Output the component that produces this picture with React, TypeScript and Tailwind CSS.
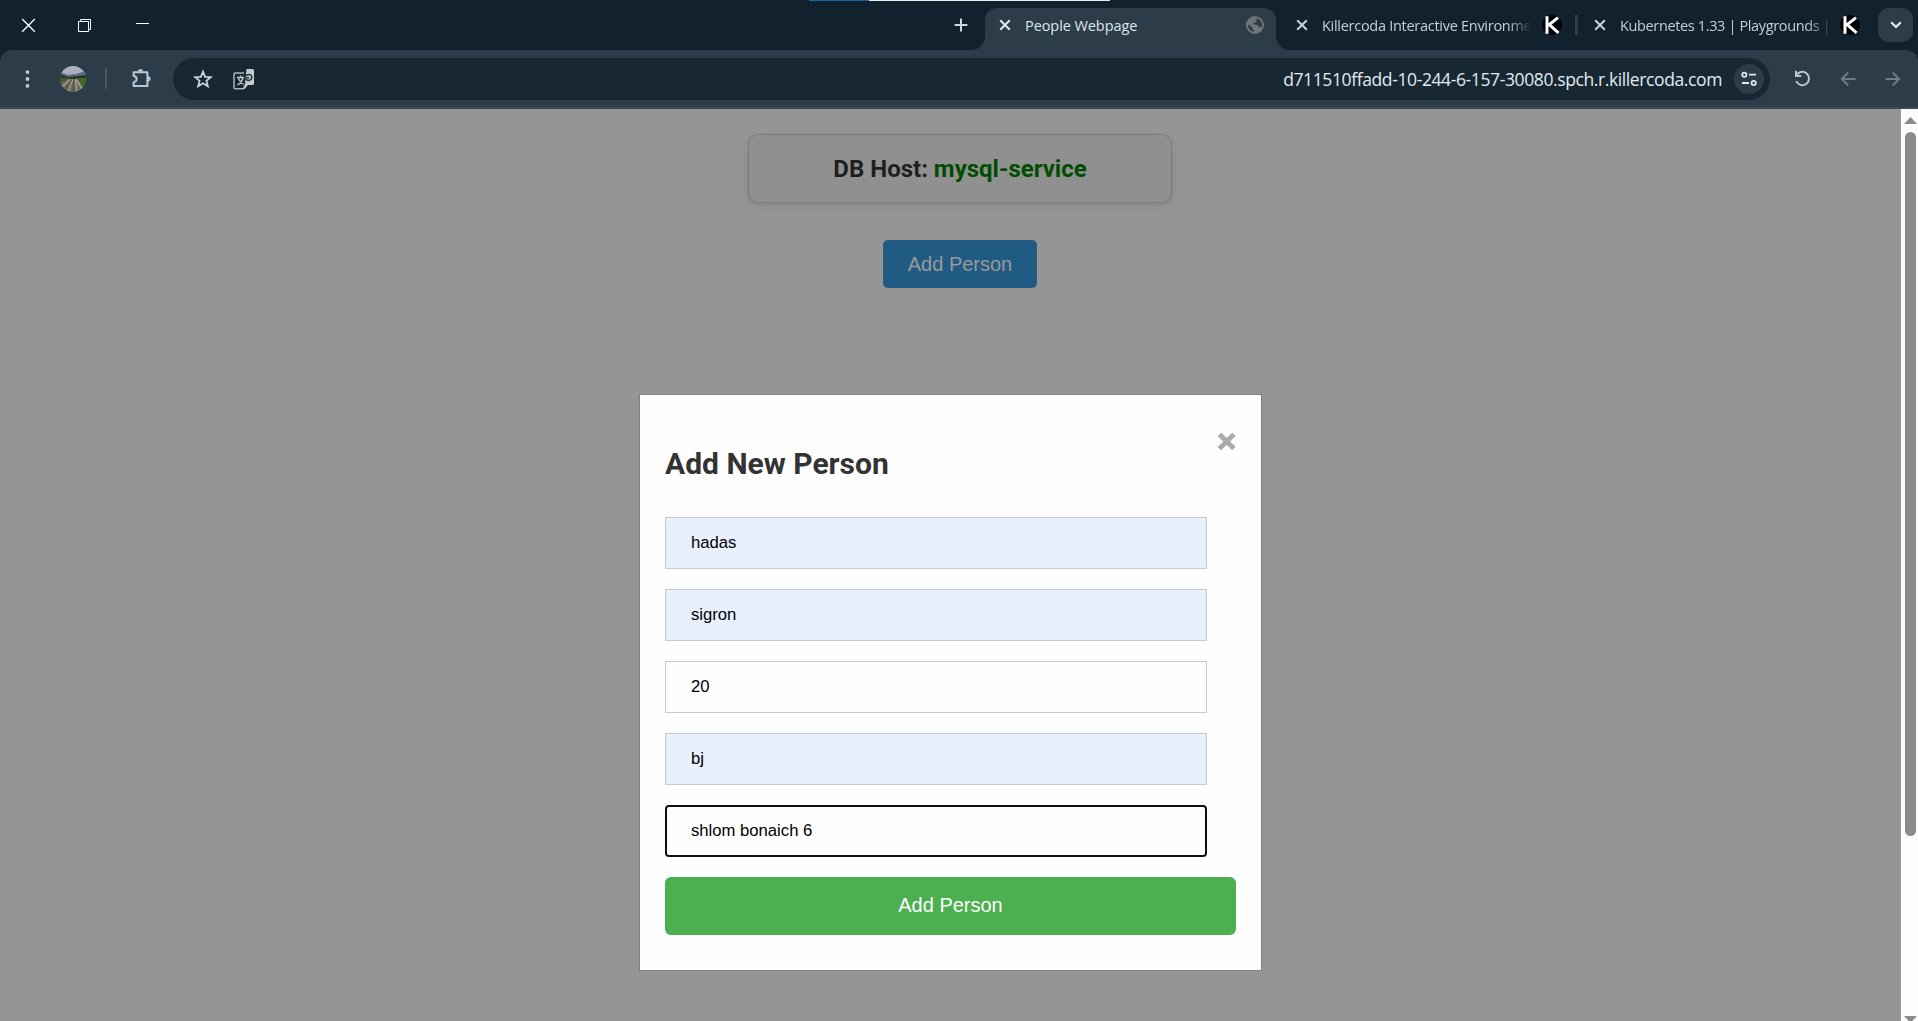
import React from "react";

const ui = "font-['Open_Sans','Noto_Sans',sans-serif]";

function CloseGlyph({ color }: { color: string }) {
  return (
    <svg className="h-3 w-3 shrink-0" viewBox="0 0 12 12" fill="none" stroke={color} strokeWidth="2">
      <path d="M1.2 1.2 10.8 10.8M10.8 1.2 1.2 10.8" />
    </svg>
  );
}

function KillercodaIcon() {
  return (
    <svg className="h-5 w-5 shrink-0" viewBox="0 0 20 20">
      <circle cx="10" cy="10" r="10" fill="#000" />
      <path d="M5 1.200V18.800M16 2.600 7.200 9.600 16.500 17.800" fill="none" stroke="#fff" strokeWidth="3" />
    </svg>
  );
}

function TabStrip() {
  return (
    <div className="relative flex h-[50px] items-center bg-[#11212d]">
      <div className="absolute left-[809px] top-0 flex h-px w-[301px]">
        <div className="w-[60px] bg-[#1c64a0]" />
        <div className="flex-1 bg-[#e3f1f3]" />
      </div>
      <svg className="ml-[21px] h-[15px] w-[15px]" viewBox="0 0 15 15" stroke="#fff" strokeWidth="1.3" fill="none">
        <path d="M1.2 1 13.8 13.8M13.8 1 1.2 13.8" />
      </svg>
      <svg className="ml-[41px] h-[15px] w-[15px]" viewBox="0 0 15 15" stroke="#fff" fill="none">
        <path d="M1.5 3.5h10v10h-10zM3.5 3.5v-2h10v10h-2" />
      </svg>
      <div className="ml-[44px] mb-[3px] h-px w-[13px] bg-white" />
      <svg className="ml-[805px] h-[14px] w-[14px]" viewBox="0 0 14 14" stroke="#c9d9e6" strokeWidth="2">
        <path d="M7 .6V13.4M.6 7H13.4" />
      </svg>

      <div className="relative ml-[17px] mt-2 flex h-[42px] w-[291px] items-center rounded-t-[12px] bg-[#2c3c48] pb-2 pl-[14px] pr-3">
        <svg className="absolute -left-[14px] bottom-0 h-[14px] w-[14px]" viewBox="0 0 14 14">
          <path d="M14 0V14H0A14 14 0 0 0 14 0Z" fill="#2c3c48" />
        </svg>
        <svg className="absolute -right-[14px] bottom-0 h-[14px] w-[14px]" viewBox="0 0 14 14">
          <path d="M0 0V14H14A14 14 0 0 1 0 0Z" fill="#2c3c48" />
        </svg>
        <CloseGlyph color="#dfeaf2" />
        <span className={`ml-[14px] mt-[2px] flex-1 whitespace-nowrap text-[14.500px] tracking-[-0.080px] leading-5 text-[#dbe6ee] ${ui}`}>People Webpage</span>
        <svg className="h-[18px] w-[18px]" viewBox="0 0 18 18">
          <circle cx="9" cy="9" r="9" fill="#6d747b" />
          <path
            d="M10.500 2.200C13.800 2.900 16 5.600 16 9c0 1-.2 1.800-.5 2.500-.6-.7-1.300-1-2.200-1h-1.300c0-1.300-.7-2.100-2-2.100H7.500V6.500H9c.9 0 1.500-.6 1.500-1.500ZM2.100 8.600 6.300 11.300v1.200c0 .8.700 1.400 1.600 1.400v1.900C4.400 15.300 2 12.500 2 9Z"
            fill="#2c3c48"
          />
        </svg>
      </div>

      <div className="ml-[20px] flex w-[266px] items-center">
        <CloseGlyph color="#c3d2dd" />
        <span className={`ml-[14px] mt-[2px] w-[210px] whitespace-nowrap text-[14.500px] tracking-[-0.280px] leading-5 text-[#c0d0dc] [mask-image:linear-gradient(to_right,#000_186px,transparent_210px)] ${ui}`}>
          Killercoda Interactive Environme
        </span>
        <span className="ml-[10px] flex"><KillercodaIcon /></span>
      </div>
      <div className="ml-[13px] h-5 w-[3px] bg-[#2c3c48]" />
      <div className="ml-[16px] flex items-center">
        <CloseGlyph color="#c3d2dd" />
        <span className={`ml-[14px] mt-[2px] w-[210px] whitespace-nowrap text-[14.500px] tracking-[-0.360px] leading-5 text-[#c0d0dc] [mask-image:linear-gradient(to_right,#000_186px,transparent_214px)] ${ui}`}>
          Kubernetes 1.33 | Playgrounds |
        </span>
        <span className="ml-[10px] flex"><KillercodaIcon /></span>
      </div>
      <div className="ml-[18px] flex h-[34px] w-[35px] items-center justify-center rounded-[11px] bg-[#2c3c48]">
        <svg className="h-2 w-3" viewBox="0 0 12 8" fill="none" stroke="#e4eef5" strokeWidth="2.200">
          <path d="M1.200 1.200 6 6 10.800 1.200" />
        </svg>
      </div>
    </div>
  );
}

function Toolbar() {
  return (
    <div className="bg-[#11212d]">
      <div className="flex h-[59px] items-center rounded-t-[12px] border-b-2 border-[#3f4954] bg-[#2c3c48]">
        <svg className="ml-[25px] h-[18px] w-[5px]" viewBox="0 0 5 18" fill="#b9cddc">
          <circle cx="2.500" cy="2.100" r="1.900" />
          <circle cx="2.500" cy="9" r="1.900" />
          <circle cx="2.500" cy="15.900" r="1.900" />
        </svg>
        <svg className="ml-[30px] h-[26px] w-[26px] overflow-hidden rounded-full" viewBox="0 0 26 26">
          <rect width="26" height="26" fill="#6f6a60" />
          <rect width="26" height="9" fill="#a9b0bd" />
          <path d="M0 6 8 9 16 8 26 5V12H0Z" fill="#5b6b7c" />
          <path d="M0 8 8 11 18 10 26 9V13H0Z" fill="#25362f" />
          <path d="M0 12H9L2 17 0 18Z" fill="#425a35" />
          <path d="M17 12H26V24L22 20Z" fill="#3f6a26" />
          <path d="M11 13 2 21M13 13 8 26M15 13 17 26M16 13 23 24" stroke="#a89c8c" strokeWidth="1.400" />
          <path d="M12 13 5 24M14 13 13 26" stroke="#4b463f" strokeWidth="1" />
        </svg>
        <div className="ml-[19px] h-5 w-[2px] bg-[#475966]" />
        <svg className="ml-[24px] mb-[1px] h-[22px] w-[22px]" viewBox="0 0 22 22">
          <path
            d="M3.200 4.200H17V17.900H3.200V14.200C7.300 13.600 7.300 8.600 3.200 8Z"
            transform="translate(-.6 1)"
            fill="none"
            stroke="#b4cadb"
            strokeWidth="2"
            strokeLinejoin="round"
          />
          <path d="M6.900 4.500a2.600 2.600 0 0 1 5.200 0ZM17 9.200a2.600 2.600 0 0 1 0 5.200Z" fill="#b4cadb" />
        </svg>

        <div className="ml-[20px] flex h-[42px] w-[1597px] items-center rounded-full bg-[#182833]">
          <svg className="ml-[20px] h-5 w-5" viewBox="0 0 20 20" fill="none" stroke="#c6d5e0" strokeWidth="1.800">
            <path d="m10 2.600 2.100 5.200 5.600.4-4.300 3.600 1.400 5.500L10 14.300l-4.800 3 1.400-5.500L2.300 8.200l5.600-.4Z" />
          </svg>
          <svg className="ml-[20px] h-[22px] w-[22px]" viewBox="0 0 22 22">
            <path d="M11 5H2.200Q1 5 1 6.200V19.500Q1 20.700 2.200 20.700H10.500" fill="none" stroke="#a6b1b9" strokeWidth="1.500" />
            <path d="M13.500 1H19.500Q21 1 21 2.500V15.500Q21 17 19.500 17H15L11.500 21H9.500L12 16Z" fill="#c3cbd1" />
            <path d="M4 9.500H11M7.500 7.500V9.500M10 9.500Q9 14.500 4.500 17M5.500 10.500Q7 14.500 10.500 16.500" fill="none" stroke="#c3cbd1" strokeWidth="1.300" />
            <path d="M12.800 7.500Q17.500 5 18.800 8.200 19.300 12 15.800 12.500 12.800 12.300 13.300 10.200 14.500 8.800 16 10.200" fill="none" stroke="#26343f" strokeWidth="1.500" />
          </svg>
          <span className={`ml-auto whitespace-nowrap text-[17.500px] tracking-[-0.390px] leading-6 text-[#e2eaf0] ${ui}`}>
            d711510ffadd-10-244-6-157-30080.spch.r.killercoda.com
          </span>
          <div className="ml-[12px] mr-[6px] flex h-[30px] w-[30px] items-center justify-center rounded-full bg-[#2c3c48]">
            <svg className="h-4 w-4" viewBox="0 0 16 16" fill="none" stroke="#dfe9f0" strokeWidth="1.800">
              <circle cx="3.300" cy="3.700" r="2.100" />
              <path d="M8 3.700H15M1 12H8" />
              <circle cx="12.700" cy="12" r="2.100" />
            </svg>
          </div>
        </div>

        <svg className="ml-[24px] h-[17px] w-[17px]" viewBox="0 0 17 17" fill="none" stroke="#b4c6d3" strokeWidth="2">
          <path d="M2 .8V6H7.200M2.200 5.800A6.700 6.700 0 1 1 2.200 11.200" />
        </svg>
        <svg className="ml-[29px] h-4 w-4" viewBox="0 0 16 16" fill="none" stroke="#6d7e8a" strokeWidth="1.800">
          <path d="M15.500 8H2M8.300 1.500 1.800 8 8.300 14.500" />
        </svg>
        <svg className="ml-[29px] h-4 w-4" viewBox="0 0 16 16" fill="none" stroke="#6d7e8a" strokeWidth="1.800">
          <path d="M.5 8H14M7.700 1.500 14.200 8 7.700 14.500" />
        </svg>
      </div>
    </div>
  );
}

const fields = [
  { value: "hadas", filled: true },
  { value: "sigron", filled: true },
  { value: "20", filled: false },
  { value: "bj", filled: true },
];

const fieldBase =
  "flex h-[52px] w-[542px] items-center font-['Liberation_Sans',Arial,sans-serif] text-[16.670px] text-black pb-[2px]";

function Modal() {
  return (
    <div className="absolute left-[639px] top-[285px] h-[577px] w-[623px] border border-[#7f7f7f] bg-[#fefefe] px-[25px] pt-[25px]">
      <div className="flex h-[96px] items-start justify-between">
        <h2 className="mt-[24px] whitespace-nowrap font-['Roboto',sans-serif] text-[30px] font-bold leading-[40px] text-[#333]">
          Add New Person
        </h2>
        <span className="mt-[1px] font-['Liberation_Sans',Arial,sans-serif] text-[32px] font-bold leading-[40px] text-[#aaa] [-webkit-text-stroke:1.200px_#aaa]">×</span>
      </div>
      <div className="flex flex-col gap-5 pt-[1px]">
        {fields.map((f) => (
          <div
            key={f.value}
            className={`${fieldBase} border border-[#c6c8cc] pl-[25px] ${f.filled ? "bg-[#e8f0fe]" : "bg-[#fefefe]"}`}
          >
            {f.value}
          </div>
        ))}
        <div className={`${fieldBase} rounded-[4px] border-2 border-[#101010] bg-[#fefefe] pl-[24px]`}>shlom bonaich 6</div>
        <button className="h-[58px] w-[571px] rounded-[6px] bg-[#4caf50] pb-[2px] font-['Liberation_Sans',Arial,sans-serif] text-[20px] text-white">
          Add Person
        </button>
      </div>
    </div>
  );
}

function Scrollbar() {
  return (
    <div className="flex w-[17px] flex-col items-center overflow-hidden bg-[#fcfcfc] pl-[2px] pt-[8px]">
      <svg className="h-[7px] w-[13px] shrink-0" viewBox="0 0 13 7" fill="#8a8a8a">
        <path d="M0 7 6.500 0 13 7Z" />
      </svg>
      <div className="mt-[8px] h-[704px] w-[11px] shrink-0 rounded-full bg-[#8b8b8b]" />
      <svg className="mt-[180px] h-[7px] w-[13px] shrink-0" viewBox="0 0 13 7" fill="#8a8a8a">
        <path d="M0 0 6.500 7 13 0Z" />
      </svg>
    </div>
  );
}

export default function App() {
  return (
    <div className="flex h-[1021px] w-[1918px] flex-col overflow-hidden">
      <TabStrip />
      <Toolbar />
      <div className="relative flex min-h-0 flex-1 bg-[#959595]">
        <main className="flex flex-1 flex-col items-center pl-[19px] pt-[25px]">
          <div className="flex h-[69px] w-[424px] items-center justify-center rounded-[10px] border border-[#7c7c7c] bg-[#909090] pt-[1px] shadow-[0_2px_6px_rgba(0,0,0,0.12)]">
            <p className="whitespace-nowrap font-['Roboto',sans-serif] text-[24px] font-bold text-[#1f1f1f]">
              DB Host: <span className="text-[#004d00]">mysql-service</span>
            </p>
          </div>
          <button className="mt-[37px] h-[48px] w-[154px] rounded-[5px] bg-[#205b83] font-['Liberation_Sans',Arial,sans-serif] text-[20px] text-[#999]">
            Add Person
          </button>
        </main>
        <Scrollbar />
        <Modal />
      </div>
    </div>
  );
}
